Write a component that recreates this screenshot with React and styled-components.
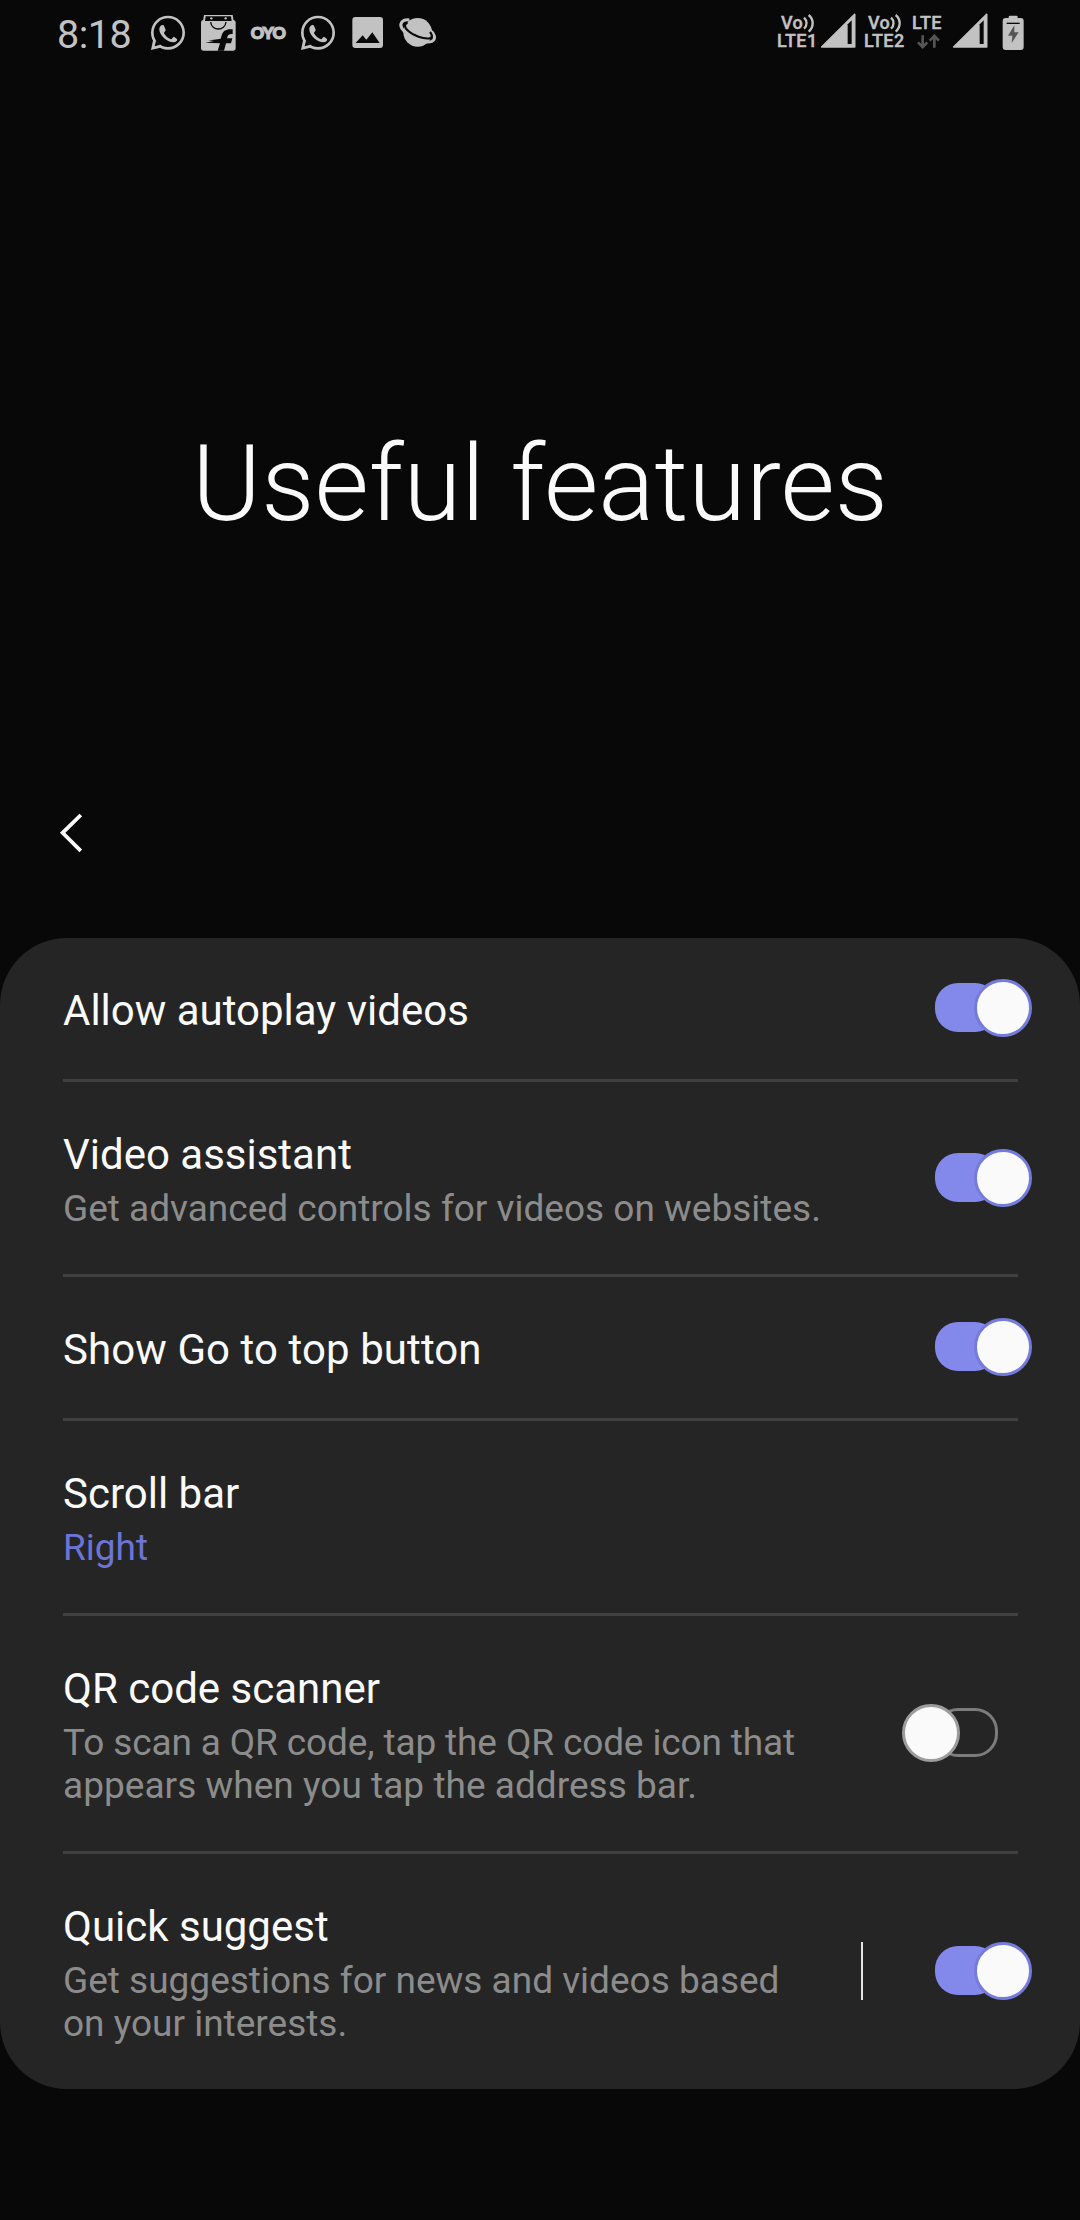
import React from "react";
import styled, { createGlobalStyle, css } from "styled-components";

const INK = "#c2c2c2";
const BG = "#080808";

const Global = createGlobalStyle`
  *, *::before, *::after { box-sizing: border-box; }
  html, body { margin: 0; background: ${BG}; }
  body { font-family: Roboto, "Noto Sans", sans-serif; color: #fafafa; }
`;

const Screen = styled.main`
  width: 1080px;
  height: 2220px;
  display: flex;
  flex-direction: column;
  background: ${BG};
  overflow: hidden;
`;

const StatusBar = styled.header`
  height: 64px;
  flex: none;
  display: flex;
  justify-content: space-between;
  align-items: flex-start;
  padding: 0 56px 0 57px;
  color: ${INK};
`;

const StatusGroup = styled.div`
  display: flex;
  align-items: flex-start;
`;

const Clock = styled.time`
  width: 86px;
  padding-top: 12px;
  font-size: 39.5px;
  line-height: 46px;
  letter-spacing: -0.5px;
`;

const StatusIcon = styled.svg`
  display: block;
  width: ${(p) => p.$w || 50}px;
  height: 52px;
  margin-right: ${(p) => p.$gap || 0}px;
`;

const OyoLogo = styled.span`
  width: 50px;
  padding-top: 23px;
  text-align: center;
  font-family: Lato, Roboto, sans-serif;
  font-size: 16.5px;
  line-height: 21px;
  font-weight: 900;
  letter-spacing: -0.6px;
  -webkit-text-stroke: 1.2px ${INK};
`;

const Network = styled.div`
  width: ${(p) => p.$w}px;
  padding-top: 14px;
  margin-right: ${(p) => p.$gap || 0}px;
  display: flex;
  flex-direction: column;
  font-size: 18px;
  line-height: 18px;
  font-weight: 500;
  letter-spacing: 0.4px;
  -webkit-text-stroke: 0.4px ${INK};
`;

const NetworkLine = styled.span`
  display: flex;
  height: 18px;
  padding-left: ${(p) => p.$indent || 0}px;
  white-space: nowrap;
`;

const Waves = styled.svg`
  width: 12px;
  height: 18px;
  overflow: visible;
`;

const Arrows = styled.svg`
  width: 24px;
  height: 15px;
  margin: 2px 0 0 5px;
`;

const Hero = styled.section`
  height: 730px;
  flex: none;
  padding-top: 359px;
`;

const Title = styled.h1`
  margin: 0;
  text-align: center;
  font-size: 105px;
  line-height: 124px;
  font-weight: 300;
`;

const Toolbar = styled.nav`
  height: 144px;
  flex: none;
  padding: 17px 0 0 58px;
`;

const BackButton = styled.button`
  display: block;
  padding: 0;
  border: 0;
  background: none;
  color: #fafafa;
  svg { display: block; }
`;

const Card = styled.section`
  flex: none;
  border-radius: 67px;
  background: #252525;
  padding: 0 62px 0 63px;
`;

const Row = styled.div`
  height: ${(p) => p.$height}px;
  display: flex;
  justify-content: space-between;
`;

const Divider = styled.div`
  height: 3px;
  background: #404040;
`;

const Label = styled.div`
  padding-top: 48px;
`;

const RowTitle = styled.div`
  font-size: 42px;
  line-height: 49px;
  letter-spacing: ${(p) => p.$tracking || 0}px;
`;

const Summary = styled.div`
  margin-top: 8px;
  font-size: 37px;
  line-height: 43px;
  color: ${(p) => (p.$accent ? "#6c74d6" : "#8c8c8c")};
`;

const SummaryLine = styled.div`
  letter-spacing: ${(p) => p.$tracking || 0}px;
  white-space: nowrap;
`;

const Controls = styled.div`
  display: flex;
  align-items: center;
  padding: 0 20px 2px 0;
`;

const Separator = styled.span`
  width: 2px;
  height: 58px;
  margin-right: 72px;
  background: #e6e6e6;
`;

const Track = styled.span`
  position: relative;
  width: 63px;
  height: 49px;
  border-radius: 23px;
  ${(p) =>
    p.$on
      ? css`background: #8389ea;`
      : css`border: 3px solid #7c7c7c;`}
`;

const Thumb = styled.span`
  position: absolute;
  top: ${(p) => (p.$on ? -4 : -7)}px;
  left: ${(p) => (p.$on ? 39 : -36)}px;
  width: 58px;
  height: 58px;
  border-radius: 50%;
  background: #fafafa;
  border: 3px solid ${(p) => (p.$on ? "#747bdc" : "#9c9c9c")};
`;

function Toggle({ on }) {
  return (
    <Track $on={on} role="switch" aria-checked={on}>
      <Thumb $on={on} />
    </Track>
  );
}

function WhatsApp() {
  return (
    <StatusIcon viewBox="309 0 150 156">
      <path d="M341 112 L333 150 L370 141" fill={INK} />
      <circle cx="384" cy="98" r="47" fill={BG} stroke={INK} strokeWidth="8" />
      <path d="M348 122 L344 139 L361 134 Z" fill={BG} />
      <path
        d="M358 85 C360 77 366 73 371 76 L377 89 C378 93 371 96 372 100 C377 109 384 115 393 118 C397 118 398 110 402 110 L411 117 C413 122 408 126 400 127 C383 126 360 109 358 90 Z"
        fill={INK}
      />
    </StatusIcon>
  );
}

function ShoppingBag() {
  return (
    <StatusIcon viewBox="459 0 150 156">
      <path d="M489 64 L492 45 H578 L581 64 Z" fill={INK} />
      <rect x="483" y="60" width="104" height="92" rx="8" fill={INK} />
      <path d="M497 49 H573 L575 63 H495 Z" fill={BG} />
      <circle cx="514" cy="55" r="3.5" fill={INK} />
      <circle cx="557" cy="55" r="3.5" fill={INK} />
      <path d="M512 66 C514 94 556 94 558 66" fill="none" stroke={BG} strokeWidth="4" />
      <path
        d="M578 88 C558 86 549 93 545 106 L542 116 L522 119 L505 121 L522 123 L496 128 L540 130 L533 152 H552 L558 130 H573 L577 115 H561 C563 104 567 101 578 102 Z"
        fill={BG}
      />
    </StatusIcon>
  );
}

function Picture() {
  return (
    <StatusIcon viewBox="339 0 150 156">
      <rect x="367" y="51" width="92" height="93" rx="9" fill={INK} />
      <path d="M377 129 L398 106 L409 119 L427 97 L449 129 Z" fill={BG} />
    </StatusIcon>
  );
}

function Planet() {
  return (
    <StatusIcon viewBox="489 0 150 156">
      <circle cx="563" cy="97" r="43" fill={INK} />
      <path
        d="M538 60 C516 57 507 72 516 86 C533 110 582 132 606 124 C619 116 614 101 600 91"
        fill="none"
        stroke={INK}
        strokeWidth="9"
      />
      <path
        d="M533 69 C522 70 522 82 534 92 C550 107 581 118 599 115 C609 112 606 103 600 96"
        fill="none"
        stroke={BG}
        strokeWidth="6.5"
      />
    </StatusIcon>
  );
}

function Signal({ gap }) {
  return (
    <StatusIcon $w={36} $gap={gap} viewBox="178 0 108 156">
      <path
        d="M183 141 L282 43 V141 Z"
        fill={INK}
        stroke={INK}
        strokeWidth="5"
        strokeLinejoin="round"
      />
      <path d="M261 73 L273 61 V132 H261 Z" fill={BG} />
    </StatusIcon>
  );
}

function Battery() {
  return (
    <StatusIcon $w={22} viewBox="724 0 66 156">
      <rect x="744" y="47" width="27" height="16" rx="4" fill={INK} />
      <rect x="726" y="54" width="63" height="96" rx="9" fill={INK} />
      <rect x="738" y="68" width="39" height="4" fill={BG} />
      <path d="M761 76 L742 107 H755 L753 129 L774 97 H761 Z" fill="#555" />
    </StatusIcon>
  );
}

function Volte({ sim, gap }) {
  return (
    <Network $w={42} $gap={gap}>
      <NetworkLine $indent={4}>
        Vo
        <Waves viewBox="125 45 36 54" fill="none" stroke={INK} strokeWidth="7">
          <path d="M128 56 C138 65 138 80 128 89" />
          <path d="M142 48 C158 61 158 85 142 98" />
        </Waves>
      </NetworkLine>
      <NetworkLine>LTE{sim}</NetworkLine>
    </Network>
  );
}

const settings = [
  { title: "Allow autoplay videos", height: 141, on: true },
  {
    title: "Video assistant",
    summary: [{ text: "Get advanced controls for videos on websites." }],
    height: 192,
    on: true,
  },
  { title: "Show Go to top button", tracking: 0.08, height: 141, on: true },
  { title: "Scroll bar", summary: [{ text: "Right" }], accent: true, height: 192 },
  {
    title: "QR code scanner",
    summary: [
      { text: "To scan a QR code, tap the QR code icon that", tracking: -0.13 },
      { text: "appears when you tap the address bar.", tracking: 0.03 },
    ],
    height: 235,
    on: false,
  },
  {
    title: "Quick suggest",
    summary: [
      { text: "Get suggestions for news and videos based" },
      { text: "on your interests." },
    ],
    height: 235,
    on: true,
    separated: true,
  },
];

export default function App() {
  return (
    <Screen>
      <Global />
      <StatusBar>
        <StatusGroup>
          <Clock>8:18</Clock>
          <WhatsApp />
          <ShoppingBag />
          <OyoLogo>OYO</OyoLogo>
          <WhatsApp />
          <Picture />
          <Planet />
        </StatusGroup>
        <StatusGroup>
          <Volte sim="1" gap={1} />
          <Signal gap={8} />
          <Volte sim="2" gap={6} />
          <Network $w={34} $gap={6}>
            <NetworkLine>LTE</NetworkLine>
            <Arrows viewBox="469 103 72 45" fill="none" stroke="#555" strokeWidth="8">
              <path d="M486 107 V142 M472 128 L486 142 L500 128" />
              <path d="M521 144 V109 M507 123 L521 109 L535 123" />
            </Arrows>
          </Network>
          <Signal gap={14} />
          <Battery />
        </StatusGroup>
      </StatusBar>
      <Hero>
        <Title>Useful features</Title>
      </Hero>
      <Toolbar>
        <BackButton aria-label="Back">
          <svg width="26" height="44" viewBox="0 0 26 44" fill="none">
            <path
              d="M22.8 4 L4.6 21.8 L22.8 39.8"
              stroke="currentColor"
              strokeWidth="3.8"
            />
          </svg>
        </BackButton>
      </Toolbar>
      <Card>
        {settings.map((s, i) => (
          <React.Fragment key={s.title}>
            {i > 0 && <Divider />}
            <Row $height={s.height}>
              <Label>
                <RowTitle $tracking={s.tracking}>{s.title}</RowTitle>
                {s.summary && (
                  <Summary $accent={s.accent}>
                    {s.summary.map((line) => (
                      <SummaryLine key={line.text} $tracking={line.tracking}>
                        {line.text}
                      </SummaryLine>
                    ))}
                  </Summary>
                )}
              </Label>
              {s.on !== undefined && (
                <Controls>
                  {s.separated && <Separator />}
                  <Toggle on={s.on} />
                </Controls>
              )}
            </Row>
          </React.Fragment>
        ))}
      </Card>
    </Screen>
  );
}
